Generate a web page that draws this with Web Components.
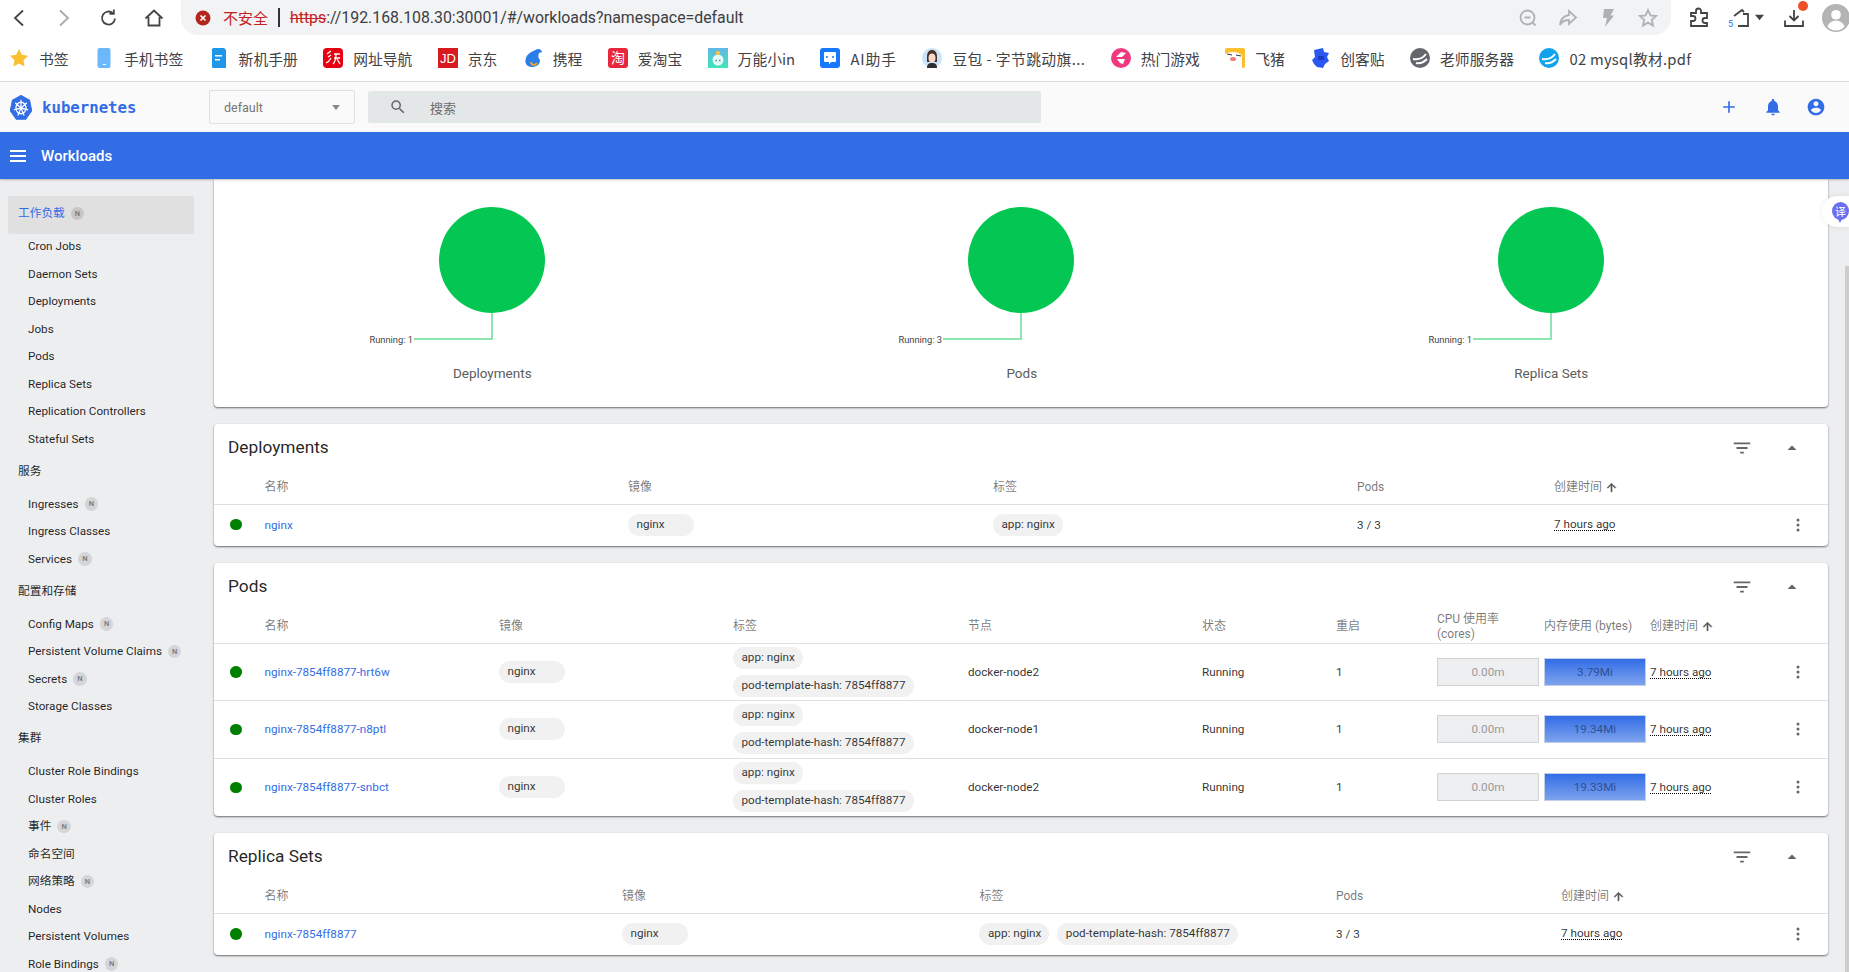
<!DOCTYPE html>
<html lang="zh">
<head>
<meta charset="utf-8">
<title>Workloads - Kubernetes Dashboard</title>
<style>
  html, body { margin: 0; height: 100%; overflow: hidden; background: #edeef0; }
  body { font: 11.7px Roboto, "Noto Sans CJK SC", sans-serif; color: rgba(0,0,0,.87); display: flex; flex-direction: column; width: 1849px; height: 972px; position: relative; }
  .main { display: flex; flex: 1; min-height: 0; }
  .bm { width: 20px; height: 20px; display: block; }
</style>
</head>
<body>
<template id="chrome-tpl">
  <style>
    :host { display: flex; align-items: center; height: 35px; background: #fff; font-family: Roboto, "Noto Sans CJK SC", sans-serif; position: relative; }
    .nav { width: 20px; height: 20px; flex: none; fill: none; stroke: #444; stroke-width: 1.8; }
    .bar { position: relative; margin-left: 17px; width: 1490px; height: 35px; background: #f1f3f4; border-radius: 0 0 17px 17px; display: flex; align-items: center; box-sizing: border-box; padding-left: 14px; flex: none; font-size: 15.85px; color: #3c4043; }
    .warn { color: #c5221f; margin-left: 12px; font-size: 15px; font-family: "Noto Sans CJK SC", sans-serif; }
    .sep { width: 2px; height: 19px; background: #333; margin: 0 10px 0 10px; }
    s { color: #c5221f; text-decoration-thickness: 1px; }
    .tail { margin-left: auto; display: flex; gap: 20px; padding-right: 13px; align-items: center; }
    .tail svg { width: 20px; height: 20px; fill: none; stroke: #b0b2b5; stroke-width: 1.8; }
    .ext { position: relative; display: flex; align-items: center; }
    .ext svg { width: 22px; height: 22px; fill: none; stroke: #444; stroke-width: 1.8; flex: none; }
  </style>
  <svg class="nav" style="margin-left:8px" viewBox="0 0 20 20"><path d="M15 2.5 7 10l8 7.5"/></svg>
  <svg class="nav" style="margin-left:26px;stroke:#aaa" viewBox="0 0 20 20"><path d="M6 2.5 14 10l-8 7.5"/></svg>
  <svg class="nav" style="margin-left:25px" viewBox="0 0 20 20"><path d="M16 10.5a6.5 6.5 0 1 1-2-5.2"/><path d="M14.8 1.5v4.4h-4.4" /></svg>
  <svg class="nav" style="margin-left:25px" viewBox="0 0 20 20"><path d="M1.5 10.5 10 2.5l8.5 8M4.5 9v8.5h11V9"/></svg>
  <div class="bar">
    <svg width="16" height="16" viewBox="0 0 16 16" style="flex:none"><circle cx="8" cy="8" r="7.5" fill="#b3261e"/><path d="M5.5 5.5l5 5m0-5-5 5" stroke="#fff" stroke-width="1.6"/></svg>
    <span class="warn">不安全</span><span class="sep"></span>
    <span><s>https</s>://192.168.108.30:30001/#/workloads?namespace=default</span>
    <div class="tail">
      <svg viewBox="0 0 20 20"><circle cx="9.5" cy="9.5" r="7"/><path d="M6.5 9.5h6M14.5 14.5l3 3"/></svg>
      <svg viewBox="0 0 20 20"><path d="M11 3l7 6.5-7 6.5v-4c-4 0-7 1.500-9 5 .5-5.500 3.500-9 9-10z"/></svg>
      <svg viewBox="0 0 20 20" style="fill:#aeb0b3;stroke:none"><path d="M6 1h10l-3.500 6.500H16L7 19l2-9H5z"/></svg>
      <svg viewBox="0 0 20 20"><path d="M10 2l2.400 5.400 5.800.6-4.400 3.900 1.300 5.700-5.100-3-5.100 3 1.300-5.700L1.800 8l5.800-.6z"/></svg>
    </div>
  </div>
  <div class="ext" style="margin-left:17px"><svg viewBox="0 0 22 22"><path d="M3 7h5V5a2.500 2.500 0 0 1 5 0v2h6v5h-2a2.500 2.500 0 0 0 0 5h2v3H3v-5h2a2.500 2.500 0 0 0 0-5H3z" transform="translate(0 -1)"/></svg></div>
  <div class="ext" style="margin-left:20px"><svg viewBox="0 0 22 22"><path d="M4 9l8-6 2 2M13 7h5v12H8"/></svg><span style="position:absolute;left:-2px;top:12px;font-size:9px;color:#1a73e8">5</span>
    <svg viewBox="0 0 10 10" style="width:9px;height:9px;fill:#444;stroke:none;margin-left:3px"><path d="M0 2h10L5 8z"/></svg></div>
  <div class="ext" style="margin-left:19px"><svg viewBox="0 0 22 22"><path d="M11 3v10M6.500 9l4.500 4.500L15.500 9M2 13.500v5.500h18v-5.500"/></svg><span style="position:absolute;right:-3px;top:-6px;width:10px;height:10px;border-radius:50%;background:#ee4f27"></span></div>
  <svg style="margin-left:17px;flex:none" width="28" height="28" viewBox="0 0 26 26"><circle cx="13" cy="13" r="13" fill="#b4b4b4"/><circle cx="13" cy="10" r="4.500" fill="#fff"/><path d="M5 21c1.500-4 4.500-5.500 8-5.500s6.500 1.500 8 5.500a10.500 10.500 0 0 1-16 0z" fill="#fff"/></svg>
</template>

<chrome-bar></chrome-bar>
<bookmark-bar>
  <book-mark label="书签"><svg class="bm" viewBox="0 0 20 20"><path d="M10 1l2.800 5.800 6.200.9-4.500 4.500 1.100 6.300L10 15.500l-5.600 3 1.100-6.300L1 7.700l6.200-.9z" fill="#fbc02d"/></svg></book-mark>
  <book-mark label="手机书签"><svg class="bm" viewBox="0 0 20 20"><rect x="3.500" y="0" width="13" height="20" rx="2" fill="#6db8fb"/><rect x="9" y="16" width="3" height="1" fill="#fff"/></svg></book-mark>
  <book-mark label="新机手册"><svg class="bm" viewBox="0 0 20 20"><path d="M4 0h11l2 2v18H6a2 2 0 0 1-3-2V1z" fill="#1f96e8"/><path d="M6 7h7v1.500H6zM6 11h5v1.500H6z" fill="#fff"/></svg></book-mark>
  <book-mark label="网址导航"><svg class="bm" viewBox="0 0 20 20"><rect width="20" height="20" rx="4" fill="#e60012"/><path d="M4 6l4-3M5 9l3-2M3 15c3-1 4-3 5-5M11 6h6M11 10h6M13 6c0 5-1 8-3 10M14 11l3 5" fill="none" stroke="#fff" stroke-width="1.300"/></svg></book-mark>
  <book-mark label="京东"><svg class="bm" viewBox="0 0 20 20"><rect width="20" height="20" fill="#d71920"/><text x="10" y="15" text-anchor="middle" font-family="Liberation Sans" font-size="13" fill="#fff">JD</text></svg></book-mark>
  <book-mark label="携程"><svg class="bm" viewBox="0 0 20 20"><path d="M15 1c3 0 4 2 4 3l-3 1c-1 3-1 5 1 7 0 5-4 7-8 7C4 19 1 15 3 10 4 6 9 3 15 1z" fill="#2b7de9"/><path d="M8 14c0 3 4 4 6 1" fill="none" stroke="#f5a623" stroke-width="1.800"/></svg></book-mark>
  <book-mark label="爱淘宝"><svg class="bm" viewBox="0 0 20 20"><rect width="20" height="20" rx="3" fill="#e8273c"/><text x="10" y="15" text-anchor="middle" font-family="Noto Sans CJK SC" font-size="14" fill="#fff">淘</text></svg></book-mark>
  <book-mark label="万能小in"><svg class="bm" viewBox="0 0 20 20"><defs><linearGradient id="wn" x1="0" y1="0" x2="0" y2="1"><stop offset="0" stop-color="#62b6e8"/><stop offset="1" stop-color="#3fe6b8"/></linearGradient></defs><rect width="20" height="20" fill="url(#wn)"/><circle cx="10" cy="12" r="5.500" fill="#e9fbf6"/><rect x="8" y="3" width="4" height="4" rx="1" fill="#f2c14e"/><path d="M7.500 12.500h1.500M11 12.500h1.500" stroke="#3a8fb0" stroke-width="1.500"/></svg></book-mark>
  <book-mark label="AI助手" style="letter-spacing:.9px"><svg class="bm" viewBox="0 0 20 20"><rect width="20" height="20" rx="3" fill="#1677ff"/><path d="M4 5a1 1 0 0 1 1-1h10a1 1 0 0 1 1 1v8a1 1 0 0 1-1 1h-4l-2 2.500V14H5a1 1 0 0 1-1-1z" fill="#fff"/><path d="M7 8v2M13 8v2" stroke="#1677ff" stroke-width="1.500"/></svg></book-mark>
  <book-mark label="豆包 - 字节跳动旗..." style="letter-spacing:.4px"><svg class="bm" viewBox="0 0 20 20"><circle cx="10" cy="10" r="10" fill="#c9e3fa"/><path d="M5 9c0-5 2-7 5-7s5 2 5 7v5H5z" fill="#4a3029"/><ellipse cx="10" cy="10" rx="3.500" ry="4.500" fill="#f7d9cc"/><path d="M5 20c0-4 2-5 5-5s5 1 5 5z" fill="#2d2d33"/></svg></book-mark>
  <book-mark label="热门游戏"><svg class="bm" viewBox="0 0 20 20"><circle cx="10" cy="10" r="10" fill="#f0397f"/><path d="M5 9l5-5 5 1-4 4zM6 11h8l-2 5-3-1z" fill="#fff"/></svg></book-mark>
  <book-mark label="飞猪"><svg class="bm" viewBox="0 0 20 20"><rect width="20" height="20" rx="2" fill="#fcc02e"/><path d="M0 6c5-3 14-3 17 2v12H0z" fill="#fff"/><ellipse cx="8" cy="11" rx="3" ry="2" fill="#f47a7a"/><path d="M2 6l5 1M11 7l5 1" stroke="#333" stroke-width="1"/></svg></book-mark>
  <book-mark label="创客贴"><svg class="bm" viewBox="0 0 20 20"><path d="M4 2l9-2 1 4 5 1-2 4 2 4-4 3-2 4-6-1-3-3-2-4 3-3z" fill="#2b58f0"/><path d="M8 8h6v4H8z" fill="#1c3bc2"/></svg></book-mark>
  <book-mark label="老师服务器"><svg class="bm" viewBox="0 0 20 20"><circle cx="10" cy="10" r="10" fill="#63666b"/><path d="M3 11c5 1 10-1 13-5M6 15c4 1 8-1 11-4" fill="none" stroke="#fff" stroke-width="2"/></svg></book-mark>
  <book-mark label="02 mysql教材.pdf" style="letter-spacing:.25px"><svg class="bm" viewBox="0 0 20 20"><circle cx="10" cy="10" r="10" fill="#12a3ee"/><path d="M3 11c5 1 10-1 13-5M6 15c4 1 8-1 11-4" fill="none" stroke="#fff" stroke-width="2"/></svg></book-mark>
</bookmark-bar>
<kube-toolbar></kube-toolbar>
<action-bar>Workloads</action-bar>

<div class="main">
  <side-nav>
    <nav-item head active badge>工作负载</nav-item>
    <nav-item>Cron Jobs</nav-item>
    <nav-item>Daemon Sets</nav-item>
    <nav-item>Deployments</nav-item>
    <nav-item>Jobs</nav-item>
    <nav-item>Pods</nav-item>
    <nav-item>Replica Sets</nav-item>
    <nav-item>Replication Controllers</nav-item>
    <nav-item>Stateful Sets</nav-item>
    <nav-item head>服务</nav-item>
    <nav-item badge>Ingresses</nav-item>
    <nav-item>Ingress Classes</nav-item>
    <nav-item badge>Services</nav-item>
    <nav-item head>配置和存储</nav-item>
    <nav-item badge>Config Maps</nav-item>
    <nav-item badge>Persistent Volume Claims</nav-item>
    <nav-item badge>Secrets</nav-item>
    <nav-item>Storage Classes</nav-item>
    <nav-item head>集群</nav-item>
    <nav-item>Cluster Role Bindings</nav-item>
    <nav-item>Cluster Roles</nav-item>
    <nav-item badge>事件</nav-item>
    <nav-item>命名空间</nav-item>
    <nav-item badge>网络策略</nav-item>
    <nav-item>Nodes</nav-item>
    <nav-item>Persistent Volumes</nav-item>
    <nav-item badge>Role Bindings</nav-item>
  </side-nav>

  <content-area>
    <chart-card>
      <status-chart running="1">Deployments</status-chart>
      <status-chart running="3">Pods</status-chart>
      <status-chart running="1">Replica Sets</status-chart>
    </chart-card>

    <resource-card title="Deployments" style="--cols: 50.6px 363.4px 365px 364px 197px 232.5px 24px; --row-pad: 2px">
      <table-head><span></span><div>名称</div><div>镜像</div><div>标签</div><div>Pods</div><sort-head>创建时间</sort-head></table-head>
      <table-row>
        <status-dot></status-dot><res-link>nginx</res-link>
        <chip-list><res-chip image>nginx</res-chip></chip-list>
        <chip-list><res-chip>app: nginx</res-chip></chip-list>
        <div>3 / 3</div><res-age>7 hours ago</res-age><res-menu></res-menu>
      </table-row>
    </resource-card>

    <resource-card title="Pods" style="--cols: 50.6px 234.4px 234px 235px 234px 134px 101px 107px 106px 136.5px 24px; --row: 57.33px">
      <table-head><span></span><div>名称</div><div>镜像</div><div>标签</div><div>节点</div><div>状态</div><div>重启</div><div>CPU 使用率<br>(cores)</div><div>内存使用 (bytes)</div><sort-head>创建时间</sort-head></table-head>
      <table-row>
        <status-dot></status-dot><res-link>nginx-7854ff8877-hrt6w</res-link>
        <chip-list><res-chip image>nginx</res-chip></chip-list>
        <chip-list><res-chip>app: nginx</res-chip><res-chip>pod-template-hash: 7854ff8877</res-chip></chip-list>
        <div>docker-node2</div><div>Running</div><div>1</div>
        <metric-box>0.00m</metric-box><metric-box kind="mem">3.79Mi</metric-box><res-age>7 hours ago</res-age><res-menu></res-menu>
      </table-row>
      <table-row>
        <status-dot></status-dot><res-link>nginx-7854ff8877-n8ptl</res-link>
        <chip-list><res-chip image>nginx</res-chip></chip-list>
        <chip-list><res-chip>app: nginx</res-chip><res-chip>pod-template-hash: 7854ff8877</res-chip></chip-list>
        <div>docker-node1</div><div>Running</div><div>1</div>
        <metric-box>0.00m</metric-box><metric-box kind="mem">19.34Mi</metric-box><res-age>7 hours ago</res-age><res-menu></res-menu>
      </table-row>
      <table-row>
        <status-dot></status-dot><res-link>nginx-7854ff8877-snbct</res-link>
        <chip-list><res-chip image>nginx</res-chip></chip-list>
        <chip-list><res-chip>app: nginx</res-chip><res-chip>pod-template-hash: 7854ff8877</res-chip></chip-list>
        <div>docker-node2</div><div>Running</div><div>1</div>
        <metric-box>0.00m</metric-box><metric-box kind="mem">19.33Mi</metric-box><res-age>7 hours ago</res-age><res-menu></res-menu>
      </table-row>
    </resource-card>

    <resource-card title="Replica Sets" style="--cols: 50.6px 357.4px 357.5px 356.5px 225px 225.5px 24px; --row-pad: 1px">
      <table-head><span></span><div>名称</div><div>镜像</div><div>标签</div><div>Pods</div><sort-head>创建时间</sort-head></table-head>
      <table-row>
        <status-dot></status-dot><res-link>nginx-7854ff8877</res-link>
        <chip-list><res-chip image>nginx</res-chip></chip-list>
        <chip-list><res-chip>app: nginx</res-chip><res-chip>pod-template-hash: 7854ff8877</res-chip></chip-list>
        <div>3 / 3</div><res-age>7 hours ago</res-age><res-menu></res-menu>
      </table-row>
    </resource-card>
  </content-area>
</div>
<translate-bubble></translate-bubble>
<page-scrollbar></page-scrollbar>

<script>
  const tpl = id => document.getElementById(id).content.cloneNode(true);

  class ChromeBar extends HTMLElement {
    constructor() {
      super();
      this.attachShadow({ mode: 'open' }).appendChild(tpl('chrome-tpl'));
    }
  }
  customElements.define('chrome-bar', ChromeBar);

  class BookmarkBar extends HTMLElement {
    constructor() {
      super();
      this.attachShadow({ mode: 'open' }).innerHTML = `
        <style>
          :host { display: flex; align-items: center; gap: 25.4px; height: 46px; padding-left: 9px; background: #fff; border-bottom: 1px solid #dcdcdc; }
        </style>
        <slot></slot>`;
    }
  }
  customElements.define('bookmark-bar', BookmarkBar);

  class BookMark extends HTMLElement {
    constructor() {
      super();
      this.attachShadow({ mode: 'open' }).innerHTML = `
        <style>
          :host { display: flex; align-items: center; gap: 10px; font: 14.8px "Noto Sans CJK SC", Roboto, sans-serif; color: #3f4246; white-space: nowrap; }
        </style>
        <slot></slot><span>${this.getAttribute('label')}</span>`;
    }
  }
  customElements.define('book-mark', BookMark);

  class KubeToolbar extends HTMLElement {
    constructor() {
      super();
      this.attachShadow({ mode: 'open' }).innerHTML = `
        <style>
          :host { display: flex; align-items: center; height: 50px; background: #fafafa; flex: none; }
          .logo { margin-left: 10px; width: 22px; height: 25px; flex: none; }
          .name { margin-left: 10px; width: 167px; font: bold 15.7px "DejaVu Sans Mono", monospace; color: #326de6; }
          .ns { width: 146px; height: 34px; box-sizing: border-box; border: 1px solid #e0e0e0; border-radius: 2px; display: flex; align-items: center; justify-content: space-between; padding: 0 14px 0 14px; color: #757575; font-size: 12.5px; flex: none; }
          .ns i { width: 0; height: 0; border: 4px solid transparent; border-top: 5px solid #888; border-bottom: 0; }
          .search { margin-left: 13px; width: 673px; height: 32px; background: #e4e7e8; border-radius: 2px; display: flex; align-items: center; flex: none; color: #6d6d6d; font-size: 13px; padding-left: 21px; box-sizing: border-box; }
          .search svg { width: 18px; height: 18px; fill: #666; margin-right: 23px; }
          .acts { margin-left: auto; margin-right: 23px; display: flex; gap: 23.5px; }
          .acts svg { width: 20px; height: 20px; fill: #326de6; display: block; }
        </style>
        <svg class="logo" viewBox="0 0 24 24" preserveAspectRatio="none"><polygon points="12,.5 21.400,5 23.700,15.200 17.200,23.300 6.800,23.300 .3,15.200 2.600,5" fill="#326de6" stroke="#326de6" stroke-linejoin="round"/><g transform="translate(12 12.500)" fill="none" stroke="#fff" stroke-width="1.300"><circle r="5.500"/><path d="M0 0V-8M0 0L6.240-4.960M0 0L7.760 1.760M0 0L3.440 7.200M0 0L-3.440 7.200M0 0L-7.760 1.760M0 0L-6.240-4.960"/></g></svg>
        <span class="name">kubernetes</span>
        <div class="ns"><span>default</span><i></i></div>
        <div class="search"><svg viewBox="0 0 24 24"><path d="M15.500 14h-.79l-.28-.27A6.470 6.470 0 0 0 16 9.500 6.500 6.500 0 1 0 9.500 16c1.610 0 3.090-.59 4.230-1.570l.27.28v.79l5 4.990L20.490 19l-4.990-5zm-6 0C7.010 14 5 11.990 5 9.500S7.010 5 9.500 5 14 7.010 14 9.500 11.990 14 9.500 14z"/></svg><span>搜索</span></div>
        <div class="acts">
          <svg viewBox="0 0 24 24"><path d="M19 13h-6v6h-2v-6H5v-2h6V5h2v6h6v2z"/></svg>
          <svg viewBox="0 0 24 24"><path d="M12 22c1.100 0 2-.9 2-2h-4c0 1.100.9 2 2 2zm6-6v-5c0-3.070-1.630-5.640-4.500-6.320V4c0-.83-.67-1.500-1.500-1.500s-1.500.67-1.500 1.500v.68C7.640 5.360 6 7.920 6 11v5l-2 2v1h16v-1l-2-2z"/></svg>
          <svg viewBox="0 0 24 24"><path d="M12 2C6.480 2 2 6.480 2 12s4.480 10 10 10 10-4.480 10-10S17.520 2 12 2zm0 3c1.660 0 3 1.340 3 3s-1.340 3-3 3-3-1.340-3-3 1.340-3 3-3zm0 14.200c-2.500 0-4.710-1.280-6-3.220.03-1.990 4-3.080 6-3.080 1.990 0 5.970 1.090 6 3.080-1.290 1.940-3.500 3.220-6 3.220z"/></svg>
        </div>`;
    }
  }
  customElements.define('kube-toolbar', KubeToolbar);

  class ActionBar extends HTMLElement {
    constructor() {
      super();
      this.attachShadow({ mode: 'open' }).innerHTML = `
        <style>
          :host { display: flex; align-items: center; height: 47px; background: #326de6; color: #fff; flex: none; position: relative; z-index: 2; box-shadow: 0 1px 2px rgba(0,0,0,.25); font: 500 15px Roboto, sans-serif; }
          svg { width: 16px; height: 12px; margin: 0 15px 0 10px; fill: #fff; }
        </style>
        <svg viewBox="0 0 16 12"><path d="M0 0h16v2H0zM0 5h16v2H0zM0 10h16v2H0z"/></svg>
        <slot></slot>`;
    }
  }
  customElements.define('action-bar', ActionBar);

  class SideNav extends HTMLElement {
    constructor() {
      super();
      this.attachShadow({ mode: 'open' }).innerHTML = `
        <style>
          :host { display: block; width: 214px; flex: none; box-sizing: border-box; padding: 17px 20px 0 8px; overflow: hidden; }
        </style>
        <slot></slot>`;
    }
  }
  customElements.define('side-nav', SideNav);

  class NavItem extends HTMLElement {
    constructor() {
      super();
      const head = this.hasAttribute('head');
      const active = this.hasAttribute('active');
      const badge = this.hasAttribute('badge') ? '<b>N</b>' : '';
      this.attachShadow({ mode: 'open' }).innerHTML = `
        <style>
          :host { display: flex; align-items: center; gap: 6px; box-sizing: border-box; height: ${head ? 37.5 : 27.5}px; padding: 0 0 ${head ? 3 : 2}px ${head ? 10 : 20}px; line-height: 14px; white-space: nowrap; border-radius: 2px;
            ${active ? 'background:#e0e0e0;color:#326de6;' : ''} }
          b { width: 13.500px; height: 13.500px; border-radius: 50%; background: ${active ? '#c6c6c6' : '#d4d5d8'}; color: #757575; font: 500 7.500px Roboto, sans-serif; display: flex; align-items: center; justify-content: center; }
        </style>
        <span><slot></slot></span>${badge}`;
    }
  }
  customElements.define('nav-item', NavItem);

  class ContentArea extends HTMLElement {
    constructor() {
      super();
      this.attachShadow({ mode: 'open' }).innerHTML = `
        <style>
          :host { display: flex; flex-direction: column; gap: 17px; width: 1614px; flex: none; }
        </style>
        <slot></slot>`;
    }
  }
  customElements.define('content-area', ContentArea);

  class ChartCard extends HTMLElement {
    constructor() {
      super();
      this.attachShadow({ mode: 'open' }).innerHTML = `
        <style>
          :host { display: flex; height: 228px; padding: 0 12px 0 13.500px; background: #fff; border-radius: 0 0 4px 4px; box-shadow: 0 1px 2px rgba(0,0,0,.55); }
        </style>
        <slot></slot>`;
    }
  }
  customElements.define('chart-card', ChartCard);

  class StatusChart extends HTMLElement {
    constructor() {
      super();
      const running = this.getAttribute('running');
      this.attachShadow({ mode: 'open' }).innerHTML = `
        <style>
          :host { display: flex; flex-direction: column; align-items: center; width: 529.500px; flex: none; }
          svg { display: block; margin-top: 28px; }
          span { font-size: 13.500px; line-height: 16px; color: #5c5c5c; }
        </style>
        <svg width="529" height="158" viewBox="0 0 529 158">
          <circle cx="264" cy="53" r="53" fill="#03c752"/>
          <path d="M264 106v26H186" fill="none" stroke="#03c752" stroke-opacity=".6" stroke-width="1.500"/>
          <text x="185" y="136" text-anchor="end" font-size="9.300" fill="#444">Running: ${running}</text>
        </svg>
        <span><slot></slot></span>`;
    }
  }
  customElements.define('status-chart', StatusChart);

  class ResourceCard extends HTMLElement {
    constructor() {
      super();
      this.attachShadow({ mode: 'open' }).innerHTML = `
        <style>
          :host { display: block; background: #fff; border-radius: 4px; box-shadow: 0 1px 2px rgba(0,0,0,.55); }
          header { display: flex; align-items: center; height: 46px; padding-left: 14px; font-size: 17.300px; color: rgba(0,0,0,.87); }
          h2 { margin: 0; font: inherit; flex: 1; }
          svg { display: block; fill: #666; margin-top: 2px; }
        </style>
        <header>
          <h2>${this.getAttribute('title')}</h2>
          <svg width="22" height="22" viewBox="0 0 24 24" style="margin-right:27px"><path d="M10 18h4v-2h-4v2zM3 6v2h18V6H3zm3 7h12v-2H6v2z"/></svg>
          <svg width="24" height="24" viewBox="0 0 24 24" style="margin-right:24px"><path d="M7.500 14l4.500-4.500 4.500 4.500z"/></svg>
        </header>
        <slot></slot>`;
      this.removeAttribute('title');
    }
  }
  customElements.define('resource-card', ResourceCard);

  class TableHead extends HTMLElement {
    constructor() {
      super();
      this.attachShadow({ mode: 'open' }).innerHTML = `
        <style>
          :host { display: grid; grid-template-columns: var(--cols); height: 35px; box-sizing: border-box; padding-top: 1px; align-items: center; border-bottom: 1px solid #e0e0e0; color: rgba(0,0,0,.54); font-size: 12px; line-height: 14.500px; }
        </style>
        <slot></slot>`;
    }
  }
  customElements.define('table-head', TableHead);

  class TableRow extends HTMLElement {
    constructor() {
      super();
      this.attachShadow({ mode: 'open' }).innerHTML = `
        <style>
          :host { display: grid; grid-template-columns: var(--cols); height: var(--row, 41px); box-sizing: border-box; padding-bottom: var(--row-pad, 0); align-items: center; color: rgba(0,0,0,.82); }
          :host(:not(:last-child)) { border-bottom: 1px solid #e0e0e0; }
        </style>
        <slot></slot>`;
    }
  }
  customElements.define('table-row', TableRow);

  class SortHead extends HTMLElement {
    constructor() {
      super();
      this.attachShadow({ mode: 'open' }).innerHTML = `
        <style>
          :host { display: flex; align-items: center; gap: 2.5px; }
          svg { width: 13px; height: 13px; fill: #555; stroke: #555; stroke-width: 1; }
        </style>
        <slot></slot>
        <svg viewBox="0 0 24 24"><path d="M4 12l1.410 1.410L11 7.830V20h2V7.830l5.580 5.590L20 12l-8-8-8 8z"/></svg>`;
    }
  }
  customElements.define('sort-head', SortHead);

  class StatusDot extends HTMLElement {
    constructor() {
      super();
      this.attachShadow({ mode: 'open' }).innerHTML = `
        <style>
          :host { display: block; width: 11.500px; height: 11.500px; margin-left: 16px; border-radius: 50%; background: #008000; }
        </style>`;
    }
  }
  customElements.define('status-dot', StatusDot);

  class ResLink extends HTMLElement {
    constructor() {
      super();
      this.attachShadow({ mode: 'open' }).innerHTML = `
        <style>
          :host { display: block; color: #326de6; }
        </style>
        <slot></slot>`;
    }
  }
  customElements.define('res-link', ResLink);

  class ChipList extends HTMLElement {
    constructor() {
      super();
      this.attachShadow({ mode: 'open' }).innerHTML = `
        <style>
          :host { display: flex; flex-wrap: wrap; gap: 6px 8px; align-items: center; }
        </style>
        <slot></slot>`;
    }
  }
  customElements.define('chip-list', ChipList);

  class ResChip extends HTMLElement {
    constructor() {
      super();
      this.attachShadow({ mode: 'open' }).innerHTML = `
        <style>
          :host { display: block; height: 22px; line-height: 21px; padding: 0 8px 0 8.500px; box-sizing: border-box; border-radius: 11px; background: #f1f1f1; color: rgba(0,0,0,.8); white-space: nowrap; }
          :host([image]) { min-width: 66px; }
        </style>
        <slot></slot>`;
    }
  }
  customElements.define('res-chip', ResChip);

  class ResAge extends HTMLElement {
    constructor() {
      super();
      this.attachShadow({ mode: 'open' }).innerHTML = `
        <style>
          :host { display: block; width: max-content; line-height: 12px; border-bottom: 1px dotted #000; }
        </style>
        <slot></slot>`;
    }
  }
  customElements.define('res-age', ResAge);

  class ResMenu extends HTMLElement {
    constructor() {
      super();
      this.attachShadow({ mode: 'open' }).innerHTML = `
        <style>
          :host { display: block; width: 24px; height: 24px; }
          svg { display: block; fill: #666; }
        </style>
        <svg width="24" height="24" viewBox="0 0 24 24"><path d="M12 8.500a1.500 1.500 0 1 0 0-3 1.500 1.500 0 0 0 0 3zm0 2a1.500 1.500 0 1 0 0 3 1.500 1.500 0 0 0 0-3zm0 5a1.500 1.500 0 1 0 0 3 1.500 1.500 0 0 0 0-3z"/></svg>`;
    }
  }
  customElements.define('res-menu', ResMenu);

  class MetricBox extends HTMLElement {
    constructor() {
      super();
      this.attachShadow({ mode: 'open' }).innerHTML = `
        <style>
          :host { display: flex; align-items: center; justify-content: center; width: 102px; height: 28px; box-sizing: border-box; border: 1px solid #d2d2d2; background: #eeeff1; color: #9a9a9a; }
          :host([kind=mem]) { background: linear-gradient(#326de6, #7ea3ee); border-color: #c3cfe6; color: #2e4f94; }
        </style>
        <slot></slot>`;
    }
  }
  customElements.define('metric-box', MetricBox);

  class TranslateBubble extends HTMLElement {
    constructor() {
      super();
      this.attachShadow({ mode: 'open' }).innerHTML = `
        <style>
          :host { position: absolute; left: 1822px; top: 196px; width: 27px; height: 31px; box-sizing: border-box; padding: 6px 0 0 10px; background: #fff; border-radius: 16px 0 0 16px; box-shadow: 0 0 6px rgba(0,0,0,.08); z-index: 3; }
          span { position: relative; display: flex; align-items: center; justify-content: center; width: 17px; height: 18px; border-radius: 50%; background: #6a6ff0; color: #fff; font: 11px "Noto Sans CJK SC", sans-serif; }
          span::after { content: ""; position: absolute; left: 6px; bottom: -3px; border: 2.500px solid transparent; border-top: 4px solid #6a6ff0; border-bottom: 0; }
        </style>
        <span>译</span>`;
    }
  }
  customElements.define('translate-bubble', TranslateBubble);

  class PageScrollbar extends HTMLElement {
    constructor() {
      super();
      this.attachShadow({ mode: 'open' }).innerHTML = `
        <style>
          :host { position: absolute; right: 0; top: 266px; bottom: 0; width: 4px; background: #cdcdcd; }
        </style>`;
    }
  }
  customElements.define('page-scrollbar', PageScrollbar);
</script>
</body>
</html>
